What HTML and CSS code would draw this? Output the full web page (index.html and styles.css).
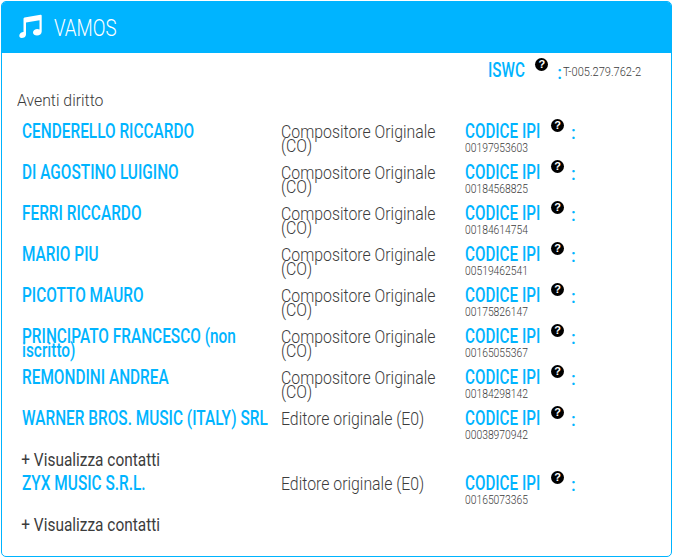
FILE: index.html
```html
<!DOCTYPE html>
<html lang="it">
<head>
    <meta charset="UTF-8">
    <title>VAMOS</title>
    <link rel="stylesheet" href="styles.css">
</head>
<body>
    <div class="card">
        <div class="card-head">
            <svg class="note" viewBox="0 0 24 24" width="24" height="24"><path fill="#fff" d="M5.500 4.800Q5.500 3.800 6.500 3.600L22.500.8Q23.700.6 23.700 1.800V17.500C23.700 20 21.500 21.500 19 21.500 16.800 21.500 15 20.400 15 18.500 15 16.300 17.200 15 19.200 15 20 15 20.900 15.200 21.500 15.600V6.200L8 8.500V20.500C8 23 5.800 24 3.700 24 1.900 24 1.300 22.900 1.300 21.600 1.300 19.500 3.400 18 5.500 18 5.500 18 5.500 18 5.500 18.100z"/></svg>
            <span class="title">VAMOS</span>
        </div>
        <div class="card-body">
            <div class="iswc">
                <span class="label iswc-label">ISWC</span>
                <span class="help">?</span>
                <span class="colon">:</span>
                <span class="iswc-code">T-005.279.762-2</span>
            </div>
            <div class="section">Aventi diritto</div>

            <div class="row">
                <div class="name">CENDERELLO RICCARDO</div>
                <div class="role">Compositore Originale (CO)</div>
                <div class="ipi"><div class="ipi-line"><span class="label">CODICE IPI</span><span class="help">?</span><span class="colon">:</span></div><div class="ipi-code">00197953603</div></div>
            </div>
            <div class="row">
                <div class="name">DI AGOSTINO LUIGINO</div>
                <div class="role">Compositore Originale (CO)</div>
                <div class="ipi"><div class="ipi-line"><span class="label">CODICE IPI</span><span class="help">?</span><span class="colon">:</span></div><div class="ipi-code">00184568825</div></div>
            </div>
            <div class="row">
                <div class="name">FERRI RICCARDO</div>
                <div class="role">Compositore Originale (CO)</div>
                <div class="ipi"><div class="ipi-line"><span class="label">CODICE IPI</span><span class="help">?</span><span class="colon">:</span></div><div class="ipi-code">00184614754</div></div>
            </div>
            <div class="row">
                <div class="name">MARIO PIU</div>
                <div class="role">Compositore Originale (CO)</div>
                <div class="ipi"><div class="ipi-line"><span class="label">CODICE IPI</span><span class="help">?</span><span class="colon">:</span></div><div class="ipi-code">00519462541</div></div>
            </div>
            <div class="row">
                <div class="name">PICOTTO MAURO</div>
                <div class="role">Compositore Originale (CO)</div>
                <div class="ipi"><div class="ipi-line"><span class="label">CODICE IPI</span><span class="help">?</span><span class="colon">:</span></div><div class="ipi-code">00175826147</div></div>
            </div>
            <div class="row">
                <div class="name">PRINCIPATO FRANCESCO (non iscritto)</div>
                <div class="role">Compositore Originale (CO)</div>
                <div class="ipi"><div class="ipi-line"><span class="label">CODICE IPI</span><span class="help">?</span><span class="colon">:</span></div><div class="ipi-code">00165055367</div></div>
            </div>
            <div class="row">
                <div class="name">REMONDINI ANDREA</div>
                <div class="role">Compositore Originale (CO)</div>
                <div class="ipi"><div class="ipi-line"><span class="label">CODICE IPI</span><span class="help">?</span><span class="colon">:</span></div><div class="ipi-code">00184298142</div></div>
            </div>
            <div class="row">
                <div class="name">WARNER BROS. MUSIC (ITALY) SRL</div>
                <div class="role">Editore originale (E0)</div>
                <div class="ipi"><div class="ipi-line"><span class="label">CODICE IPI</span><span class="help">?</span><span class="colon">:</span></div><div class="ipi-code">00038970942</div></div>
            </div>
            <div class="contacts">+ Visualizza contatti</div>
            <div class="row">
                <div class="name">ZYX MUSIC S.R.L.</div>
                <div class="role">Editore originale (E0)</div>
                <div class="ipi"><div class="ipi-line"><span class="label">CODICE IPI</span><span class="help">?</span><span class="colon">:</span></div><div class="ipi-code">00165073365</div></div>
            </div>
            <div class="contacts">+ Visualizza contatti</div>
        </div>
    </div>
</body>
</html>
```
FILE: styles.css
```css
/* no narrow font installed, so text is squeezed with scaleX from the left */
body {
    margin: 0;
    font-family: Roboto, sans-serif;
    color: #3c3c3c;
    background: #fff;
}

.card {
    margin: 1px;
    height: 556px;
    box-sizing: border-box;
    border: 1px solid #00b4ff;
    border-radius: 5px;
    overflow: hidden;
}

.card-head {
    display: flex;
    align-items: center;
    height: 51px;
    padding-left: 16px;
    background: #00b4ff;
    color: #fff;
}

.note {
    margin: 0 12px 3px 0;
}

.title {
    font-size: 24px;
    font-weight: 300;
    transform: scaleX(.78);
    transform-origin: left;
}

.card-body {
    padding: 5px 0 0 15px;
}

/* iswc line */
.iswc {
    display: flex;
    justify-content: flex-end;
    height: 32px;
    padding-right: 29px;
    align-items: flex-start;
}

.label {
    display: block;
    width: 76px;
    color: #00b4ff;
    font-size: 20px;
    font-weight: 500;
    line-height: 16px;
    margin-top: 4px;
    white-space: nowrap;
    transform: scaleX(.76);
    transform-origin: left;
}

.iswc-label {
    width: 37px;
}

.help {
    flex: none;
    width: 13px;
    height: 13px;
    margin-left: 10px;
    border-radius: 50%;
    background: #000;
    color: #fff;
    font: 700 11px/13px "Liberation Sans", sans-serif;
    text-align: center;
}

.colon {
    color: #00b4ff;
    font-size: 18px;
    font-weight: 500;
    line-height: 20px;
    margin: 4px 0 0 7px;
}

.iswc .colon {
    margin: 5px 1px 0 9px;
}

.iswc-code {
    width: 79px;
    margin-top: 7px;
    font-size: 12px;
    font-weight: 300;
    line-height: 14px;
    white-space: nowrap;
    transform: scaleX(.92);
    transform-origin: left;
}

.section {
    font-size: 17px;
    font-weight: 300;
    line-height: 20px;
    height: 30px;
    transform: scaleX(.93);
    transform-origin: left;
}

.row {
    display: grid;
    grid-template-columns: 259px 184px 1fr;
    height: 41px;
    padding-left: 5px;
}

.name {
    width: 320px;
    color: #00b4ff;
    font-size: 20px;
    font-weight: 500;
    line-height: 14px;
    padding-top: 4px;
    transform: scaleX(.77);
    transform-origin: left;
}

.role {
    width: 190px;
    font-size: 18px;
    font-weight: 300;
    line-height: 14px;
    padding-top: 5px;
    transform: scaleX(.88);
    transform-origin: left;
}

.ipi-line {
    display: flex;
    align-items: flex-start;
    height: 23px;
    margin-top: -1px;
}

.ipi-code {
    width: 64px;
    font-size: 12px;
    font-weight: 300;
    line-height: 12px;
    white-space: nowrap;
    transform: scaleX(.86);
    transform-origin: left;
}

.contacts {
    font-size: 18px;
    height: 24px;
    line-height: 24px;
    padding-left: 5px;
    transform: scaleX(.857);
    transform-origin: left;
}
```
